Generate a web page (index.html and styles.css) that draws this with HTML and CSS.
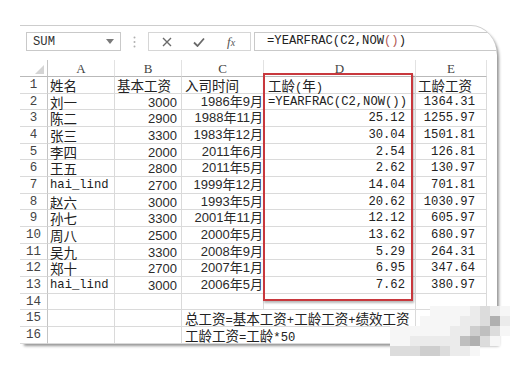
FILE: index.html
```html
<!DOCTYPE html>
<html lang="zh-CN">
<head>
<meta charset="utf-8">
<title>YEARFRAC</title>
<link rel="stylesheet" href="styles.css">
</head>
<body>
<div class="stage">
  <div class="paper">
    <div class="fbar">
      <div class="namebox"><span>SUM</span>
        <svg class="arrow" width="8" height="5" viewBox="0 0 8 5"><polygon points="0,0 8,0 4,5" fill="#7a7a7a"/></svg>
      </div>
      <div class="sep">
        <svg width="3" height="12" viewBox="0 0 3 12"><circle cx="1.5" cy="1.5" r="1" fill="#b0b0b0"/><circle cx="1.5" cy="6" r="1" fill="#b0b0b0"/><circle cx="1.5" cy="10.5" r="1" fill="#b0b0b0"/></svg>
      </div>
      <div class="btns">
        <svg class="ico-x" width="10" height="10" viewBox="0 0 10 10"><path d="M1 1 L9 9 M9 1 L1 9" stroke="#6a6a6a" stroke-width="1.4" fill="none"/></svg>
        <svg class="ico-ok" width="12" height="10" viewBox="0 0 12 10"><path d="M1 5.5 L4.5 9 L11 1.5" stroke="#6a6a6a" stroke-width="1.8" fill="none"/></svg>
        <span class="fx">f<span class="fxs">x</span></span>
      </div>
      <div class="fbox">=YEARFRAC(C2,NOW<span class="par">()</span>)</div>
    </div>

    <div class="grid">
      <div class="c corner"><svg width="9" height="9" viewBox="0 0 9 9"><polygon points="9,0 9,9 0,9" fill="#d4d4d4"/></svg></div>
      <div class="c ch">A</div><div class="c ch">B</div><div class="c ch">C</div><div class="c ch">D</div><div class="c ch">E</div>

      <div class="c rh">1</div><div class="c t">姓名</div><div class="c t">基本工资</div><div class="c t tc">入司时间</div><div class="c t td">工龄<span class="pm">(</span>年<span class="pm">)</span></div><div class="c t">工龄工资</div>
      <div class="c rh">2</div><div class="c t">刘一</div><div class="c n">3000</div><div class="c dt">1986年9月</div><div class="c m td">=YEARFRAC(C2,NOW())</div><div class="c m me">1364.31</div>
      <div class="c rh">3</div><div class="c t">陈二</div><div class="c n">2900</div><div class="c dt">1988年11月</div><div class="c m md">25.12</div><div class="c m me">1255.97</div>
      <div class="c rh">4</div><div class="c t">张三</div><div class="c n">3300</div><div class="c dt">1983年12月</div><div class="c m md">30.04</div><div class="c m me">1501.81</div>
      <div class="c rh">5</div><div class="c t">李四</div><div class="c n">2000</div><div class="c dt">2011年6月</div><div class="c m md">2.54</div><div class="c m me">126.81</div>
      <div class="c rh">6</div><div class="c t">王五</div><div class="c n">2800</div><div class="c dt">2011年5月</div><div class="c m md">2.62</div><div class="c m me">130.97</div>
      <div class="c rh">7</div><div class="c m">hai_lind</div><div class="c n">2700</div><div class="c dt">1999年12月</div><div class="c m md">14.04</div><div class="c m me">701.81</div>
      <div class="c rh">8</div><div class="c t">赵六</div><div class="c n">3000</div><div class="c dt">1993年5月</div><div class="c m md">20.62</div><div class="c m me">1030.97</div>
      <div class="c rh">9</div><div class="c t">孙七</div><div class="c n">3300</div><div class="c dt">2001年11月</div><div class="c m md">12.12</div><div class="c m me">605.97</div>
      <div class="c rh">10</div><div class="c t">周八</div><div class="c n">2500</div><div class="c dt">2000年5月</div><div class="c m md">13.62</div><div class="c m me">680.97</div>
      <div class="c rh">11</div><div class="c t">吴九</div><div class="c n">3300</div><div class="c dt">2008年9月</div><div class="c m md">5.29</div><div class="c m me">264.31</div>
      <div class="c rh">12</div><div class="c t">郑十</div><div class="c n">2700</div><div class="c dt">2007年1月</div><div class="c m md">6.95</div><div class="c m me">347.64</div>
      <div class="c rh">13</div><div class="c m">hai_lind</div><div class="c n">3000</div><div class="c dt">2006年5月</div><div class="c m md">7.62</div><div class="c m me">380.97</div>
      <div class="c rh">14</div><div class="c"></div><div class="c"></div><div class="c"></div><div class="c"></div><div class="c"></div>
      <div class="c rh">15</div><div class="c"></div><div class="c"></div><div class="c t tc ov">总工资<span class="pm">=</span>基本工资<span class="pm">+</span>工龄工资<span class="pm">+</span>绩效工资</div><div class="c"></div><div class="c"></div>
      <div class="c rh">16</div><div class="c"></div><div class="c"></div><div class="c t tc ov">工龄工资<span class="pm">=</span>工龄<span class="pm">*50</span></div><div class="c"></div><div class="c"></div>
    </div>

    <div class="redbox"></div>
  </div>

  <div class="mosaic">
    <i class="g0"></i><i class="g0"></i><i class="g0"></i><i class="g0"></i><i class="g1"></i><i class="g1"></i><i class="g1"></i><i class="g1"></i><i class="g2"></i><i class="g3"></i><i class="g2"></i><i class="g1"></i>
    <i class="g0"></i><i class="g0"></i><i class="g0"></i><i class="g1"></i><i class="g1"></i><i class="g1"></i><i class="g1"></i><i class="g2"></i><i class="g2"></i><i class="g3"></i><i class="g6"></i><i class="g2"></i>
    <i class="g1"></i><i class="g1"></i><i class="g1"></i><i class="g1"></i><i class="g1"></i><i class="g1"></i><i class="g2"></i><i class="g2"></i><i class="g4"></i><i class="g5"></i><i class="g3"></i><i class="g1"></i>
    <i class="g1"></i><i class="g1"></i><i class="g2"></i><i class="g2"></i><i class="g2"></i><i class="g2"></i><i class="g2"></i><i class="g5"></i><i class="g6"></i><i class="g3"></i><i class="g1"></i><i class="g0"></i>
    <i class="g3"></i><i class="g3"></i><i class="g3"></i><i class="g4"></i><i class="g4"></i><i class="g3"></i><i class="g2"></i><i class="g2"></i><i class="g1"></i><i class="g0"></i><i class="g0"></i><i class="g0"></i>
  </div>
</div>
</body>
</html>
```

FILE: styles.css
```css
* { box-sizing: border-box; }

body {
  margin: 0;
  width: 511px;
  height: 372px;
  overflow: hidden;
  background: #ffffff;
  color: #222222;
  font-family: "Noto Sans CJK SC", sans-serif;
}

.stage {
  position: relative;
  width: 511px;
  height: 372px;
  padding: 25px 0 0 20px;
}

.paper {
  position: relative;
  width: 477px;
  height: 319px;
  background: #ffffff;
  border-top: 1px solid #cdcdcd;
  border-top-right-radius: 26px 30px;
  box-shadow: 3px 3px 3px -1px rgba(0, 0, 0, 0.42);
  overflow: hidden;
}

/* formula bar */
.fbar {
  display: flex;
  height: 19px;
  margin-top: 6px;
  padding-left: 6px;
}

.namebox {
  width: 95px;
  border: 1px solid #c9c9c9;
  display: flex;
  align-items: center;
  justify-content: space-between;
  padding: 0 6px 0 6px;
  font: 12.2px "Liberation Mono", monospace;
  color: #333;
}

.sep {
  width: 27px;
  display: flex;
  align-items: center;
  justify-content: center;
}

.btns {
  width: 103px;
  border: 1px solid #d6d6d6;
  display: flex;
  align-items: center;
  padding-left: 13px;
}

.ico-x { margin-right: 21px; }
.ico-ok { margin-right: 22px; }

.fx {
  font: italic 13px "Liberation Serif", serif;
  color: #555;
  line-height: 1;
}

.fxs {
  font-size: 10px;
}

.fbox {
  flex: 1;
  margin-left: 3px;
  border: 1px solid #c9c9c9;
  border-right: none;
  padding-left: 12px;
  font: 12.2px "Liberation Mono", monospace;
  line-height: 17px;
  color: #222;
  white-space: nowrap;
}

.par { color: #b35a55; }

/* sheet grid */
.grid {
  display: grid;
  grid-template-columns: 28px 67px 67px 82px 152px 71px;
  grid-template-rows: 17px repeat(16, 16.67px);
  margin-top: 9px;
}

.c {
  border-right: 1px solid #dadada;
  border-bottom: 1px solid #dadada;
  padding: 0 2px;
  font-size: 13.5px;
  line-height: 16px;
  white-space: nowrap;
  min-width: 0;
}

.corner {
  display: flex;
  align-items: flex-end;
  justify-content: flex-end;
  padding: 0 3px 2px 0;
  border-bottom-color: #b9b9b9;
  border-right-color: #c4c4c4;
}

.ch {
  text-align: center;
  font: 13px "Liberation Serif", serif;
  color: #444;
  line-height: 18px;
  border-bottom-color: #b9b9b9;
  border-right-color: #e2e2e2;
}

.rh {
  text-align: center;
  font: 12.5px "Liberation Mono", monospace;
  line-height: 17px;
  color: #444;
  border-right-color: #c4c4c4;
  padding: 0;
}

.tc { padding-left: 3px; }

.td { padding-left: 4px; }

.pm {
  font: 12.2px "Liberation Mono", monospace;
}

.n {
  text-align: right;
  font: 13px "Liberation Sans", sans-serif;
  line-height: 17px;
  padding-right: 4px;
  color: #2a2a2a;
}

.dt {
  text-align: right;
  font-family: "Liberation Sans", "Noto Sans CJK SC", sans-serif;
  font-size: 13px;
  line-height: 16px;
  padding-right: 0;
  color: #2a2a2a;
}

.m {
  font: 12.2px "Liberation Mono", monospace;
  line-height: 17px;
}

.md {
  text-align: right;
  padding-right: 10px;
}

.me {
  text-align: right;
  padding-right: 11px;
}

.ov {
  border-right: none;
}

.redbox {
  position: absolute;
  left: 243px;
  top: 47px;
  width: 150px;
  height: 228px;
  border: 2.5px solid #c8383d;
  box-shadow: 1px 2px 2px rgba(0, 0, 0, 0.28);
}

/* pixelated watermark */
.mosaic {
  position: absolute;
  left: 390px;
  top: 306px;
  display: grid;
  grid-template-columns: repeat(12, 10px);
  grid-template-rows: repeat(5, 10px);
}

.mosaic i { display: block; }
.g0 { background: transparent; }
.g1 { background: #f6f6f6; }
.g2 { background: #ebebeb; }
.g3 { background: #dcdcdc; }
.g4 { background: #cecece; }
.g5 { background: #bfbfbf; }
.g6 { background: #b0b0b0; }
```
